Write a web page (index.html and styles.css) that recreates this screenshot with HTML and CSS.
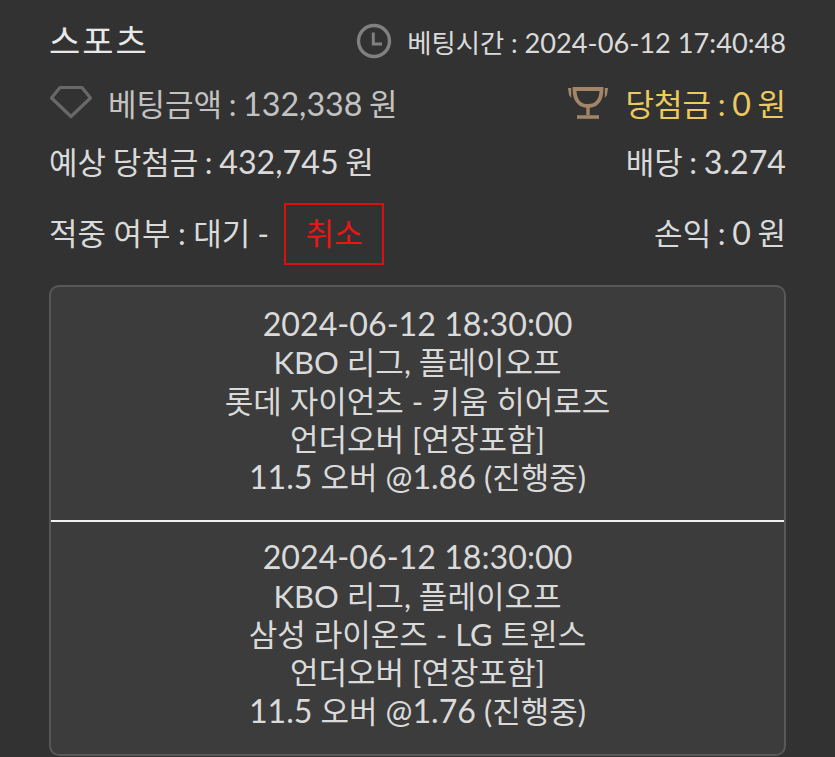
FILE: index.html
```html
<!DOCTYPE html>
<html lang="ko">
<head>
<meta charset="utf-8">
<title>스포츠</title>
<link rel="stylesheet" href="styles.css">
</head>
<body>
<main class="page">
  <div class="row row-title">
    <h1 class="title">스포츠</h1>
    <div class="meta">
      <svg class="icon icon-clock" viewBox="0 0 36 36" aria-hidden="true"><circle cx="18" cy="18" r="15.5" fill="none" stroke="#808080" stroke-width="3.4"/><path d="M17.3 9.5V21H26" fill="none" stroke="#808080" stroke-width="3"/></svg>
      <span class="time">베팅시간 : <span class="n">2024-06-12 17:40:48</span></span>
    </div>
  </div>
  <div class="row row-amount">
    <div class="meta">
      <svg class="icon icon-gem" viewBox="0 0 44 34" aria-hidden="true"><path d="M11 2.5h22L41.5 13 22 31.5 2.5 13z" fill="none" stroke="#686868" stroke-width="3.2" stroke-linejoin="round"/></svg>
      <span class="muted">베팅금액 : <span class="n">132,338</span> 원</span>
    </div>
    <div class="meta">
      <svg class="icon icon-cup" viewBox="0 0 40 33" aria-hidden="true"><path d="M6.5 3h27c0 10-4 17-13.5 17S6.5 13 6.5 3z" fill="none" stroke="#a3866a" stroke-width="3.8"/><path d="M20 20v9M9 31h22" stroke="#a3866a" stroke-width="3.4" fill="none"/><path d="M0 2h3.2v10L1 9zM40 2h-3.2v10L39 9z" fill="#a3866a"/></svg>
      <span class="gold">당첨금 : <span class="n">0</span> 원</span>
    </div>
  </div>
  <div class="row row-expect">
    <span>예상 당첨금 : <span class="n">432,745</span> 원</span>
    <span>배당 : <span class="n">3.274</span></span>
  </div>
  <div class="row row-status">
    <div class="meta">
      <span class="lift verdict">적중 여부 : 대기 -</span>
      <button class="cancel" type="button">취소</button>
    </div>
    <span class="lift">손익 : <span class="n">0</span> 원</span>
  </div>
  <section class="card">
    <div class="bet">
      <div class="n">2024-06-12 18:30:00</div>
      <div>KBO 리그, 플레이오프</div>
      <div>롯데 자이언츠 - 키움 히어로즈</div>
      <div>언더오버 [연장포함]</div>
      <div><span class="n">11.5</span> 오버 <span class="n">@1.86</span> (진행중)</div>
    </div>
    <div class="bet">
      <div class="n">2024-06-12 18:30:00</div>
      <div>KBO 리그, 플레이오프</div>
      <div>삼성 라이온즈 - LG 트윈스</div>
      <div>언더오버 [연장포함]</div>
      <div><span class="n">11.5</span> 오버 <span class="n">@1.76</span> (진행중)</div>
    </div>
  </section>
</main>
</body>
</html>
```
FILE: styles.css
```css
* { box-sizing: border-box; }
html, body { margin: 0; height: 100%; }
body {
  background: #323232;
  color: #dadada;
  font-family: Lato, "Noto Sans CJK KR", "Noto Sans", sans-serif;
  font-size: 31px;
  overflow: hidden;
}
.n { font-size: 32.2px; }
.page { padding: 16px 49px 0 49px; }
.row { display: flex; justify-content: space-between; align-items: center; word-spacing: -1.3px; }
.meta { display: flex; align-items: center; }
.lift { padding-bottom: 5px; }
.verdict { word-spacing: -0.5px; }
.row-title { height: 50px; }
.row-amount { height: 60px; margin-top: 6px; }
.row-expect { height: 50px; margin-top: 3px; }
.row-status { height: 62px; margin-top: 18px; }
.title { margin: 0; padding-bottom: 3px; font-size: 34px; font-weight: 400; color: #e8e8e8; letter-spacing: 2px; }
.time { font-size: 26.4px; margin-left: 15px; word-spacing: 0; }
.time .n { font-size: 27.2px; }
.icon { display: block; }
.icon-clock { width: 36px; height: 36px; }
.icon-gem { width: 44px; height: 34px; margin-right: 15px; }
.icon-cup { width: 40px; height: 33px; margin-right: 18px; }
.muted { color: #c2c2c2; }
.gold { color: #ecca5f; }
.cancel {
  margin-left: 15px;
  width: 100px;
  height: 62px;
  padding: 0 0 5px;
  border: 2px solid #d81010;
  background: transparent;
  color: #e81616;
  font: inherit;
}
.card {
  margin-top: 20px;
  background: #3c3c3c;
  border: 2px solid #585858;
  border-radius: 10px;
  overflow: hidden;
}
.bet { text-align: center; line-height: 38.3px; padding: 18px 0 24px; }
.bet + .bet { border-top: 2px solid #f0f0f0; padding-top: 16px; }
```
